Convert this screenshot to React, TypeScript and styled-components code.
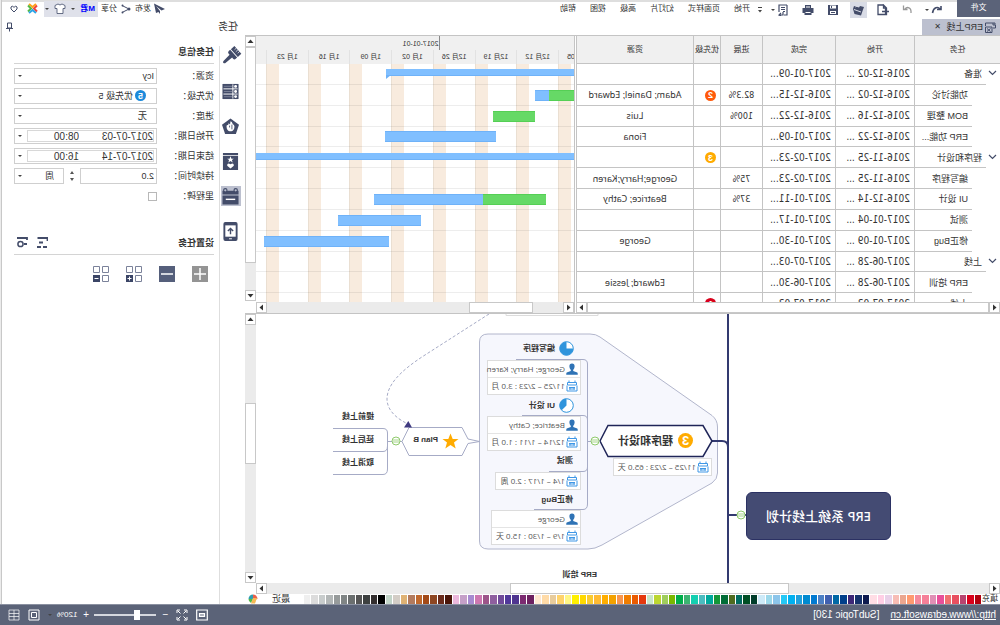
import React from "react";
import styled, { createGlobalStyle, css } from "styled-components";

const ink = "#434c69";
const line = "#c4c4c4";
const sans = `"Liberation Sans", "Noto Sans CJK SC", sans-serif`;
const humanist = `"Noto Sans", "Noto Sans CJK SC", sans-serif`;
const figures = `"DejaVu Sans Condensed", "DejaVu Sans", sans-serif`;

const Global = createGlobalStyle`
  * { box-sizing: border-box; }
  body { margin: 0; background: #ebebeb; }
  button, input, select { font: inherit; color: inherit; margin: 0; padding: 0; border: 0; background: none; border-radius: 0; }
  svg { flex: none; }
`;

/* The whole window is shown flipped left to right. */
const Window = styled.div`
  min-height: 100vh;
  display: flex;
  flex-direction: column;
  transform: scaleX(-1);
  overflow: hidden;
  background: #ebebeb;
  color: #333;
  font-family: ${sans};
  font-size: 8px;
  line-height: 12px;
`;

const Main = styled.div`
  flex: 1;
  display: flex;
  flex-direction: column;
  margin-right: 1px;
  border-right: 1px solid #c8c8c8;
  background: #fff;
`;

/* ---------- menu bar ---------- */

const MenuBar = styled.header`
  display: flex;
  align-items: center;
  height: 18px;
  border-top: 2px solid #dedede;
  padding-right: 4px;
  white-space: nowrap;
`;

const FileButton = styled.button`
  width: 43px;
  height: 18px;
  margin: -4px 11px 0 0;
  background: #5b6379;
  color: #fff;
`;

const Tools = styled.div`
  display: flex;
  align-items: center;
  gap: 8px;
`;

const ToolPair = styled.div`
  display: flex;
  align-items: center;
`;

const Tool = styled.button<{ $active?: boolean }>`
  display: flex;
  align-items: center;
  justify-content: center;
  width: 17px;
  height: 16px;
  color: ${ink};
  background: ${(p) => (p.$active ? "#d9dce6" : "transparent")};
`;

const Caret = styled.span`
  width: 0;
  height: 0;
  flex: none;
  border: 2px solid transparent;
  border-top-color: #444;
  border-bottom-width: 0;
`;

const MenuNav = styled.nav`
  display: flex;
  gap: 14px;
  margin-left: 7px;
  padding-bottom: 3px;
  flex: 1;
`;

const TextButton = styled.button`
  white-space: nowrap;
  line-height: 12px;
`;

const Account = styled.div`
  display: flex;
  align-items: center;
  gap: 3px;
  height: 16px;
  padding-bottom: 3px;
`;

const UserBox = styled.div`
  display: flex;
  align-items: center;
  gap: 5px;
  width: 54px;
  height: 16px;
  padding-left: 3px;
  background: #dfe1ea;
  color: #00f;
  font-weight: bold;
`;

const IconSlot = styled.button<{ $w: number }>`
  display: flex;
  justify-content: center;
  width: ${(p) => p.$w}px;
  color: ${ink};
`;

/* ---------- page frame ---------- */

const Body = styled.div`
  flex: 1;
  display: flex;
`;

const Left = styled.div`
  flex: 1;
  min-width: 0;
  display: flex;
  flex-direction: column;
`;

const Tabs = styled.div`
  height: 17px;
  display: flex;
  padding-top: 1px;
`;

const DocTab = styled.div`
  display: flex;
  align-items: center;
  gap: 2px;
  width: 78px;
  padding-left: 4px;
  background: #bcc0cf;
  font-size: 9px;
`;

const CloseButton = styled.button`
  margin-left: 3px;
  font-size: 8px;
  line-height: 12px;
`;

/* ---------- scroll bars ---------- */

const Bar = styled.div<{ $vertical?: boolean }>`
  display: flex;
  flex-direction: ${(p) => (p.$vertical ? "column" : "row")};
  ${(p) => (p.$vertical ? "width: 11px; min-height: 0;" : "height: 11px; min-width: 0;")}
  background: #ebebeb;
`;

const ArrowButton = styled.button`
  display: flex;
  align-items: center;
  justify-content: center;
  flex: none;
  width: 11px;
  height: 11px;
  border: 1px solid #c8c8c8;
  background: #fff;
`;

const Thumb = styled.div`
  border: 1px solid #c8c8c8;
  background: #fff;
  min-width: 0;
  min-height: 0;
`;

const Space = styled.div``;

type Dir = "up" | "down" | "left" | "right";
const arrows: Record<Dir, string> = {
  up: "M0.5 5 L3.5 1.5 L6.5 5Z",
  down: "M0.5 2 L3.5 5.5 L6.5 2Z",
  left: "M5 0.5 L1.5 3.5 L5 6.5Z",
  right: "M2 0.5 L5.5 3.5 L2 6.5Z",
};

function Arrow({ dir }: { dir: Dir }) {
  return (
    <ArrowButton type="button" aria-label={`Scroll ${dir}`}>
      <svg width="7" height="7" aria-hidden="true">
        <path d={arrows[dir]} fill="#333" />
      </svg>
    </ArrowButton>
  );
}

function ScrollBar({ vertical, parts }: { vertical?: boolean; parts: [number, number, number] }) {
  return (
    <Bar $vertical={vertical}>
      <Arrow dir={vertical ? "up" : "left"} />
      <Space style={{ flex: `${parts[0]} 0 0` }} />
      <Thumb style={{ flex: `${parts[1]} 0 0` }} />
      <Space style={{ flex: `${parts[2]} 0 0` }} />
      <Arrow dir={vertical ? "down" : "right"} />
    </Bar>
  );
}

const ChartScroll = styled.div`
  display: flex;
  flex-direction: column;
  padding-bottom: 12px;
  & > * { flex: 1; }
`;

/* ---------- task table ---------- */

const Planner = styled.section`
  display: grid;
  grid-template-columns: minmax(0, 424fr) 2px minmax(0, 318fr) 11px;
  border-top: 1px solid ${line};
  border-bottom: 1px solid ${line};
`;

const Pane = styled.div`
  display: flex;
  flex-direction: column;
  min-width: 0;
`;

const Splitter = styled.div`
  border-right: 1px solid ${line};
`;

const Table = styled.table`
  display: block;
  height: 266px;
  overflow: hidden;
`;

const TableHead = styled.thead`
  display: block;
`;

const TableBody = styled.tbody`
  display: grid;
  grid-template-rows: repeat(12, 1fr);
  height: 250px;
`;

const Row = styled.tr`
  display: grid;
  grid-template-columns: 86fr 79fr 73fr 42fr 27fr 117fr;
  min-height: 0;
`;

const HeadCell = styled.th`
  display: flex;
  align-items: center;
  justify-content: center;
  height: 28px;
  padding: 0;
  border-right: 1px solid ${line};
  border-bottom: 1px solid ${line};
  background: #f0f0f0;
  font-weight: normal;
  white-space: nowrap;
`;

const Cell = styled.td<{ $center?: boolean; $figures?: boolean }>`
  display: flex;
  align-items: center;
  justify-content: ${(p) => (p.$center ? "center" : "flex-start")};
  padding: 1px 0 0 ${(p) => (p.$center ? 0 : 4)}px;
  border-right: 1px solid ${line};
  border-bottom: 1px solid ${line};
  font-family: ${(p) => (p.$figures ? figures : humanist)};
  font-size: ${(p) => (p.$figures && !p.$center ? 10 : 9)}px;
  white-space: nowrap;
  overflow: hidden;
`;

const TaskCell = styled.td`
  display: flex;
  padding: 0;
  border-right: 1px solid ${line};
`;

const Toggle = styled.button<{ $open: boolean }>`
  width: 14px;
  visibility: ${(p) => (p.$open ? "visible" : "hidden")};
`;

const TaskName = styled.span<{ $child: boolean }>`
  flex: 1;
  display: flex;
  align-items: center;
  margin-left: ${(p) => (p.$child ? 14 : 0)}px;
  padding: 1px 0 0 4px;
  border-bottom: 1px solid ${line};
  font-size: 9px;
  white-space: nowrap;
`;

const Badge = styled.span<{ $color: string; $size: number }>`
  display: flex;
  align-items: center;
  justify-content: center;
  flex: none;
  width: ${(p) => p.$size}px;
  height: ${(p) => p.$size}px;
  border-radius: 50%;
  background: ${(p) => p.$color};
  color: #fff;
  font-family: ${sans};
  font-size: ${(p) => p.$size - 2}px;
  font-weight: bold;
`;

type Task = {
  name: string;
  child?: boolean;
  start: string;
  end: string;
  progress?: string;
  priority?: [string, string];
  who?: string;
  bar?: { from: number; done: number; todo: number; summary?: boolean; open?: boolean };
};

/* Bar positions are in units of the 318-unit wide time axis. */
const tasks: Task[] = [
  { name: "准备", start: "2016-12-02 ...", end: "2017-01-09...", bar: { from: 0, done: 0, todo: 188, summary: true } },
  { name: "功能讨论", child: true, start: "2016-12-02 ...", end: "2016-12-15...", progress: "82.3%", priority: ["2", "#ff5a0a"], who: "Adam; Daniel; Edward", bar: { from: 0, done: 25, todo: 14 } },
  { name: "BOM 整理", child: true, start: "2016-12-16 ...", end: "2016-12-22...", progress: "100%", who: "Luis", bar: { from: 39, done: 42, todo: 0 } },
  { name: "ERP 功能...", child: true, start: "2016-12-22 ...", end: "2017-01-09...", who: "Fiona", bar: { from: 78, done: 0, todo: 111 } },
  { name: "程序和设计", start: "2016-11-25 ...", end: "2017-02-23...", priority: ["3", "#ffab00"], bar: { from: 0, done: 0, todo: 318, summary: true, open: true } },
  { name: "编写程序", child: true, start: "2016-11-25 ...", end: "2017-02-23...", progress: "75%", who: "George;Harry;Karen" },
  { name: "UI 设计", child: true, start: "2016-12-14 ...", end: "2017-01-11...", progress: "37%", who: "Beatrice; Cathy", bar: { from: 28, done: 63, todo: 109 } },
  { name: "测试", child: true, start: "2017-01-04 ...", end: "2017-01-17...", bar: { from: 153, done: 0, todo: 83 } },
  { name: "修正Bug", child: true, start: "2017-01-09 ...", end: "2017-01-30...", who: "George", bar: { from: 185, done: 0, todo: 125 } },
  { name: "上线", start: "2017-06-28 ...", end: "2017-07-03..." },
  { name: "ERP 培训", child: true, start: "2017-06-28 ...", end: "2017-06-30...", who: "Edward; Jessie" },
  { name: "上线", child: true, start: "2017-07-03 ...", end: "2017-07-03...", priority: ["1", "#d9001b"] },
];

function TaskTable() {
  return (
    <Table>
      <TableHead>
        <Row>
          {["任务", "开始", "完成", "进展", "优先级", "资源"].map((h) => (
            <HeadCell key={h} scope="col">{h}</HeadCell>
          ))}
        </Row>
      </TableHead>
      <TableBody>
        {tasks.map((t, i) => (
          <Row key={i}>
            <TaskCell>
              <Toggle type="button" $open={!t.child} aria-label="Collapse">
                <svg width="9" height="6" aria-hidden="true">
                  <path d="M1 1 L4.500 4.500 L8 1" fill="none" stroke={ink} strokeWidth="1.200" />
                </svg>
              </Toggle>
              <TaskName $child={!!t.child}>{t.name}</TaskName>
            </TaskCell>
            <Cell $figures>{t.start}</Cell>
            <Cell $figures>{t.end}</Cell>
            <Cell $center $figures>{t.progress}</Cell>
            <Cell>{t.priority && <Badge $color={t.priority[1]} $size={11}>{t.priority[0]}</Badge>}</Cell>
            <Cell $center>{t.who}</Cell>
          </Row>
        ))}
      </TableBody>
    </Table>
  );
}

/* ---------- gantt chart ---------- */

const weekGrid = css`
  display: grid;
  grid-template-columns: 16fr repeat(7, 41.700fr) 10fr;
`;

const MonthRow = styled.div`
  display: flex;
  height: 14px;
  background: #f0f0f0;
  font-size: 7px;
`;

const MonthLabel = styled.div`
  margin-left: 42%;
  padding: 2px 0 0 1px;
  border-left: 1px solid #888;
`;

const WeekRow = styled.div`
  ${weekGrid}
  height: 14px;
  background: #f0f0f0;
  font-size: 7px;
`;

const WeekCell = styled.div`
  display: flex;
  align-items: center;
  justify-content: center;
  min-width: 0;
  overflow: hidden;
  white-space: nowrap;
  border-right: 1px solid #e2e2e2;
  &:first-child { justify-content: flex-end; padding-right: 8px; }
  &:last-child { border-right: 0; }
`;

const Chart = styled.div`
  display: grid;
  height: 238px;
  overflow: hidden;
`;

const Weekends = styled.div`
  ${weekGrid}
  grid-area: 1 / 1;
`;

const Weekend = styled.div`
  display: flex;
  justify-content: flex-end;
  min-width: 0;
  &::after { content: ""; width: 12px; background: #f8ebde; border-right: 1px solid #eadfd2; }
  &:last-child::after { display: none; }
`;

const Lanes = styled.div`
  grid-area: 1 / 1;
  display: grid;
  grid-template-rows: repeat(12, 1fr);
  height: 250px;
`;

const Lane = styled.div`
  display: flex;
  align-items: center;
  padding-top: 1px;
  border-bottom: 1px solid rgba(0, 0, 0, 0.07);
`;

const Piece = styled.div<{ $done?: boolean }>`
  height: 11px;
  background: ${(p) => (p.$done ? "#66d966" : "#80bfff")};
  border: solid ${(p) => (p.$done ? "#55cf55" : "#6fb2f8")};
  border-width: 1px 0;
`;

const Summary = styled.div<{ $open?: boolean }>`
  position: relative;
  height: 7px;
  margin-bottom: 3px;
  background: #80bfff;
  border-bottom: 1px solid #6fb2f8;
  &::after {
    content: "";
    display: ${(p) => (p.$open ? "none" : "block")};
    position: absolute;
    right: 0;
    top: 6px;
    border-top: 4px solid #6fb2f8;
    border-left: 5px solid transparent;
  }
`;

const pct = (n: number) => `${(n / 318) * 100}%`;

function Gantt() {
  const weeks = ["05", "12月 12", "12月 19", "12月 26", "1月 02", "1月 09", "1月 16", "1月 23", ""];
  return (
    <>
      <MonthRow><MonthLabel>2017-01-01</MonthLabel></MonthRow>
      <WeekRow>{weeks.map((w, i) => <WeekCell key={i}>{w}</WeekCell>)}</WeekRow>
      <Chart>
        <Weekends>{weeks.map((_, i) => <Weekend key={i} />)}</Weekends>
        <Lanes>
          {tasks.map((t, i) => (
            <Lane key={i}>
              {t.bar && t.bar.summary && <Summary $open={t.bar.open} style={{ width: pct(t.bar.todo) }} />}
              {t.bar && !t.bar.summary && (
                <>
                  <Piece $done style={{ marginLeft: pct(t.bar.from), width: pct(t.bar.done) }} />
                  <Piece style={{ width: pct(t.bar.todo) }} />
                </>
              )}
            </Lane>
          ))}
        </Lanes>
      </Chart>
    </>
  );
}

/* ---------- mind map ---------- */

const MapRow = styled.section`
  flex: 1;
  display: grid;
  grid-template: minmax(269px, 1fr) 11px / minmax(0, 1fr) 11px;
`;

const Canvas = styled.div`
  position: relative;
  overflow: hidden;
  background: #fff;
`;

const Lines = styled.svg`
  display: block;
  position: absolute;
  left: 0;
  top: 0;
`;

const Node = styled.div<{ $x: number; $y: number }>`
  position: absolute;
  left: ${(p) => p.$x}px;
  top: ${(p) => p.$y}px;
  display: flex;
  align-items: center;
  gap: 4px;
  font-weight: bold;
  white-space: nowrap;
`;

const RootNode = styled(Node)`
  justify-content: center;
  width: 145px;
  height: 48px;
  border: 1px solid #2b3163;
  border-radius: 6px;
  background: #444b73;
  color: #fff;
  font-family: ${humanist};
  font-size: 13px;
  font-weight: 500;
`;

const TopicNode = styled(Node)`
  gap: 5px;
  font-size: 11px;
`;

const Info = styled.div<{ $x: number; $y: number; $w: number }>`
  position: absolute;
  left: ${(p) => p.$x}px;
  top: ${(p) => p.$y}px;
  width: ${(p) => p.$w}px;
  border: 1px solid #dcdcdc;
  background: #fff;
  font-family: "Open Sans", "Noto Sans CJK SC", sans-serif;
  color: #555;
`;

const InfoRow = styled.div`
  display: flex;
  align-items: center;
  gap: 1px;
  height: 16px;
  padding-left: 2px;
  white-space: nowrap;
  & + & { border-top: 1px solid #e4e4e4; height: 17px; }
`;

const PersonIcon = () => (
  <svg width="12" height="12" viewBox="0 0 12 12" aria-hidden="true">
    <path d="M6 0.500C7.800 0.500 8.700 1.700 8.600 3.400C8.500 4.900 7.900 6.200 7.200 6.800V7.900L11.300 9.500Q11.800 10 11.800 11.700H0.200Q0.200 10 0.700 9.500L4.800 7.900V6.800C4.100 6.200 3.500 4.900 3.400 3.400C3.300 1.700 4.200 0.500 6 0.500Z" fill="#2f73b5" />
  </svg>
);

const CalendarIcon = () => (
  <svg width="12" height="12" viewBox="0 0 12 12" aria-hidden="true">
    <path d="M3 0.500V3M9 0.500V3M1.500 2.500H10.500V5H1.500ZM1 5.500V11H11V5.500M3 7.500H9M3 9H9M4 7V9.500M8 7V9.500" fill="none" stroke="#3e97e6" />
  </svg>
);

const Pie = ({ d }: { d: string }) => (
  <svg width="15" height="15" viewBox="0 0 15 15" aria-hidden="true">
    <circle cx="7.500" cy="7.500" r="6.800" fill="#fff" stroke="#2f94dc" />
    <path d={d} fill="#2f94dc" />
  </svg>
);

const Fold = ({ x, y }: { x: number; y: number }) => (
  <g stroke="#8fca6c" fill="#fff">
    <circle cx={x} cy={y} r="4" />
    <path d={`M${x - 3} ${y - 1}h6M${x - 3} ${y + 1}h6`} strokeWidth="0.800" />
  </g>
);

function MindMap() {
  return (
    <Canvas>
      <Lines width="744" height="269" aria-hidden="true">
        <path d="M410 20H512Q520.500 20 520.500 28V227Q520.500 235 512 235H412Q405 235 398 231L288 169Q282.500 165 282.500 159V113Q282.500 106 288 101.500L400 23Q404 20 410 20Z" fill="#f6f7fd" stroke="#b2b6cc" />
        <path d="M402 0V1.500H494V0" fill="none" stroke="#dcdcdc" />
        <path d="M272 0V269M272 201H254M272 133Q272 127 278 127H288" fill="none" stroke="#333a70" strokeWidth="2" />
        <path d="M400 127L392 111.500H297L288 127L297 142.500H392Z" fill="#fff" stroke="#1f2558" strokeWidth="1.500" />
        <g fill="none" stroke="#a6abc6">
          <path d="M400 127.500H412" />
          <path d="M484 45.500H417Q412.500 45.500 412.500 50V190Q412.500 195.500 417 195.500H466" />
          <path d="M478 101.500H417Q412.500 101.500 412.500 106" />
          <path d="M451 157.500H417Q412.500 157.500 412.500 153" />
          <path d="M598 127.500H612" />
          <path d="M667 114.500H617Q612.500 114.500 612.500 119V155Q612.500 160.500 617 160.500H667" />
          <path d="M612.500 132Q612.500 137.500 617 137.500H667" />
          <path d="M520.500 127.500L532 125L538 113.500H591L598 127.500L591 141.500H538L532 129.500Z" fill="#fff" />
          <path d="M511 0L575 41C600 57 613 71 613 85C613 97 602 105 594 109" strokeDasharray="3 2" />
        </g>
        <path d="M591.700 107L596 113.500H588Z" fill="#3f3a80" />
        <path d="M549.500 119.500L551.700 125H557.500L553 128.500L554.700 134.500L549.500 131L544.300 134.500L546 128.500L541.500 125H547.300Z" fill="#ffab00" />
        <Fold x={259} y={201} />
        <Fold x={405} y={127} />
        <Fold x={604} y={127} />
      </Lines>
      <RootNode $x={109} $y={178}>ERP 系统上线计划</RootNode>
      <TopicNode $x={307} $y={119}>
        <Badge $color="#ffab00" $size={15}>3</Badge>程序和设计
      </TopicNode>
      <Info $x={288} $y={144} $w={99}>
        <InfoRow><CalendarIcon />11/25 – 2/23 : 65.0 天</InfoRow>
      </Info>

      <Node $x={426} $y={27}><Pie d="M7.500 0.700A6.800 6.800 0 1 1 0.700 7.500H7.500Z" />编写程序</Node>
      <Info $x={419} $y={46} $w={94}>
        <InfoRow><PersonIcon />George; Harry; Karen</InfoRow>
        <InfoRow><CalendarIcon />11/25 – 2/23 : 3.0 月</InfoRow>
      </Info>
      <Node $x={426} $y={84}><Pie d="M7.500 0.700A6.800 6.800 0 0 1 12.300 12.300L7.500 7.500Z" />UI 设计</Node>
      <Info $x={419} $y={102} $w={94}>
        <InfoRow><PersonIcon />Beatrice; Cathy</InfoRow>
        <InfoRow><CalendarIcon />12/14 – 1/11 : 1.0 月</InfoRow>
      </Info>
      <Node $x={427} $y={141}>测试</Node>
      <Info $x={419} $y={158} $w={86}>
        <InfoRow><CalendarIcon />1/4 – 1/17 : 2.0 周</InfoRow>
      </Info>
      <Node $x={427} $y={180}>修正Bug</Node>
      <Info $x={419} $y={196} $w={90}>
        <InfoRow><PersonIcon />George</InfoRow>
        <InfoRow><CalendarIcon />1/9 – 1/30 : 15.0 天</InfoRow>
      </Info>
      <Node $x={403} $y={255}>ERP 培训</Node>
      <Node $x={562} $y={120}>Plan B</Node>
      <Node $x={626} $y={97}>提前上线</Node>
      <Node $x={626} $y={120}>延后上线</Node>
      <Node $x={626} $y={143}>取消上线</Node>
    </Canvas>
  );
}

/* ---------- colour strip ---------- */

const ColorStrip = styled.div`
  display: flex;
  align-items: center;
  height: 10px;
  padding: 0 3px 0 2px;
  white-space: nowrap;
`;

const FillLabel = styled.span`
  width: 17px;
  flex: none;
`;

const RecentLabel = styled.span`
  width: 46px;
  flex: none;
  padding-left: 14px;
  font-size: 9px;
`;

const Swatches = styled.div`
  flex: 1;
  display: flex;
  gap: 1px;
`;

const Swatch = styled.button<{ $c: string }>`
  flex: 1;
  height: 9px;
  background: #${(p) => p.$c};
`;

const palette =
  "b0000f d9001b b8446f e85060 f07070 e8509a e08fb5 f58098 f58a9c ff9a70 eba68f f7bdb5 e8d0e8 ffcfe5 ffdde5 0d1a4f 15316b 3d2777 003f8a 0068a5 3f60b0 4c80c5 0079d0 008ad0 20a0dc 00b0f0 25c8f5 8cc5ea 9cd8ea cdeaf8 003d2a 004f25 006b60 4f6b1f 006d37 149638 00a99d 4bbcc0 14cfb0 3cb371 00ad4a 7ab800 9fcd5c bcd631 c9e6c9 e5390e ea5b00 f07d00 f7964f f3a200 ffae00 ffbb33 f9cb32 ffd900 fff000 fff685 ffd36b e8cc9c ffdba8 ffe8d0 6d2160 7c2a70 4f3590 50389a 704a9a 8f5f9f 9c5589 cc78b0 a78bd0 c5a0c8 ebb8dc 4a1509 6b2b1c 8e4622 a34a18 c0692e b37b5e dfb274 d3cdc6 c3d5c9 000000 332e2e 3d4040 555555 6b6f6f 808585 979b9b b3b7b7 c8cccc dcdcdc efefef".split(" ");

/* ---------- side panel ---------- */

const Panel = styled.aside`
  width: 243px;
  flex: none;
  display: flex;
  flex-direction: column;
`;

const PanelTitle = styled.div`
  display: flex;
  align-items: center;
  justify-content: space-between;
  height: 18px;
  padding: 0 3px 0 7px;
  font-size: 10px;
`;

const PanelBody = styled.div`
  flex: 1;
  display: flex;
  margin-top: 10px;
`;

const Rail = styled.div`
  display: flex;
  flex-direction: column;
  gap: 15px;
  width: 26px;
  padding-left: 4px;
  border-right: 1px solid #dedede;
`;

const RailButton = styled.button<{ $active?: boolean }>`
  display: flex;
  align-items: center;
  justify-content: center;
  width: 20px;
  height: 20px;
  color: ${ink};
  background: ${(p) => (p.$active ? "#bcc0cf" : "transparent")};
`;

const Form = styled.form`
  flex: 1;
  display: flex;
  flex-direction: column;
  gap: 4px;
  padding: 0 12px 0 5px;
  font-size: 9px;
`;

const Heading = styled.div`
  display: flex;
  justify-content: space-between;
  height: 18px;
  border-bottom: 1px solid #d4d4d4;
  font-weight: bold;
`;

const HeadingTools = styled.div`
  display: flex;
  gap: 8px;
  padding-right: 2px;
  color: ${ink};
`;

const Field = styled.div`
  display: flex;
  align-items: center;
  height: 16px;
`;

const Label = styled.label`
  width: 57px;
  flex: none;
`;

const Box = styled.div<{ $w?: number }>`
  position: relative;
  display: flex;
  align-items: center;
  ${(p) => (p.$w ? `width: ${p.$w}px;` : "flex: 1;")}
  min-width: 0;
  height: 16px;
  padding: 1px 3px 1px 2px;
  border: 1px solid #cfcfcf;
  background: #fff;
`;

const Select = styled.select<{ $pad: number }>`
  flex: 1;
  min-width: 0;
  appearance: none;
  padding-left: ${(p) => p.$pad}px;
  line-height: 12px;
  outline: none;
`;

const FieldBadge = styled(Badge)`
  position: absolute;
  left: 10px;
  top: 1px;
`;

const DateInner = styled.div`
  flex: 1;
  display: flex;
  justify-content: space-between;
  height: 12px;
  margin-right: 5px;
  padding: 0 23px 0 0;
  border: 1px solid #d8d8d8;
  font-size: 10px;
`;

const TextInput = styled.input<{ $w: number }>`
  width: ${(p) => p.$w}px;
  height: 10px;
  line-height: 10px;
  outline: none;
`;

const Spinner = styled.div`
  display: flex;
  flex-direction: column;
  align-items: center;
  gap: 4px;
  width: 16px;
`;

const SpinButton = styled.button<{ $up?: boolean }>`
  width: 4px;
  height: 3px;
  background: #555;
  clip-path: ${(p) => (p.$up ? "polygon(50% 0, 100% 100%, 0 100%)" : "polygon(0 0, 100% 0, 50% 100%)")};
`;

const Check = styled.input`
  appearance: none;
  width: 9px;
  height: 9px;
  border: 1px solid #b8b8b8;
  background: #fff;
`;

const Gap = styled.div`
  height: 25px;
`;

const Actions = styled.div`
  display: flex;
  gap: 17px;
  padding: 7px 0 0 6px;
`;

const Action = styled.button`
  width: 16px;
  height: 16px;
  display: flex;
`;

const Sq = ({ sign }: { sign: "+" | "-" }) => (
  <svg width="16" height="16" aria-hidden="true">
    <path d="M0.500 0.500H6.500V6.500H0.500ZM9.500 0.500H15.500V6.500H9.500ZM0.500 9.500H6.500V15.500H0.500Z" fill="#fff" stroke="#7b829a" />
    <path d="M9 9H16V16H9Z" fill="#3b4566" />
    <path d={sign === "+" ? "M10.500 12.500H14.500M12.500 10.500V14.500" : "M10.500 12.500H14.500"} stroke="#fff" />
  </svg>
);

function DateField({ label, id, date, time }: { label: string; id: string; date: string; time: string }) {
  return (
    <Field>
      <Label htmlFor={id}>{label}</Label>
      <Box>
        <DateInner>
          <TextInput id={id} $w={56} defaultValue={date} />
          <TextInput $w={28} defaultValue={time} aria-label={`${label} time`} />
        </DateInner>
        <Caret />
      </Box>
    </Field>
  );
}

const railIcons: [string, React.ReactNode][] = [
  ["Format", <g key="a" fill="currentColor" transform="rotate(-48 9 9)"><path d="M3.500 -1.500H14.500V3.500H3.500ZM3.500 4.500H14.500V6.500Q14.500 8.500 12.500 8.500H11L10.500 18Q9 20.500 7.500 18L7 8.500H5.500Q3.500 8.500 3.500 6.500Z" /><path d="M6.500 -2V1M9 -2V1.500M11.500 -2V1" stroke="#fff" strokeWidth="0.700" /></g>],
  ["Outline", <g key="b"><path fill="currentColor" d="M0.500 1H17.500V17H0.500Z" /><path stroke="#fff" fill="none" d="M6.500 1.500V16.500M1.500 6.200H16.500M1.500 11.700H16.500" /><path stroke="#8b91a5" fill="none" strokeWidth="0.800" d="M7 3.500H16M7 9H16M7 14.500H16" /><g fill="#fff"><circle cx="3.600" cy="3.600" r="1.500" /><circle cx="3.600" cy="9" r="1.500" /><circle cx="3.600" cy="14.400" r="1.500" /></g></g>],
  ["Clipart", <g key="c"><path fill="currentColor" d="M9 0.500L18 7.200L14.700 17H3.300L0 7.200Z" /><path d="M6.500 6.500Q7.500 3.500 9 3.500L9.500 7L11 5.500L11.500 7.500Q13.500 7 13.200 9Q13 13.500 10 14H8Q5 13.500 4.800 9Q5 7 6.500 6.500Z" fill="#fff" /><path d="M7.500 7V12M10 8V10" stroke="currentColor" strokeWidth="0.900" /></g>],
  ["Marks", <g key="d"><path fill="currentColor" d="M1 0H17V2H1ZM1 3H17V18H1Z" /><path fill="#fff" d="M9 3.500L10 6H12.500L10.500 7.500L11.300 10L9 8.600L6.700 10L7.500 7.500L5.500 6H8ZM9 16.500L5.500 13.500Q5.200 11 7.200 11L9 12L10.800 11Q12.800 11 12.500 13.500Z" /></g>],
  ["Task", <g key="e"><path fill="currentColor" d="M0.500 3H17.500V7H0.500ZM0.500 8H17.500V17.500H0.500Z" /><circle cx="3.500" cy="2.500" r="1.800" fill="#bcc0cf" stroke="currentColor" strokeWidth="1.200" /><circle cx="14.500" cy="2.500" r="1.800" fill="#bcc0cf" stroke="currentColor" strokeWidth="1.200" /><path stroke="#fff" strokeWidth="1.500" d="M4 12H14" /></g>],
  ["Slides", <g key="f"><rect x="1.500" y="-1" width="15" height="20" rx="2" fill="currentColor" /><path fill="#fff" d="M3.500 2.500H14.500V14.500H3.500Z" /><path stroke="currentColor" strokeWidth="1.500" fill="none" d="M9 12V6M6.200 8.500L9 5.700L11.800 8.500" /><path d="M7.500 16.700H10.500" stroke="#fff" /></g>],
];

function TaskPanel() {
  return (
    <Panel>
      <PanelTitle>
        任务
        <svg width="9" height="10" viewBox="0 0 9 10" aria-hidden="true">
          <path d="M2.500 1V6H6.500V1ZM1 6.500H8M4.500 6V9.500" fill="none" stroke={ink} />
        </svg>
      </PanelTitle>
      <PanelBody>
        <Rail>
          {railIcons.map(([name, icon], i) => (
            <RailButton key={name} type="button" aria-label={name} $active={i === 4}>
              <svg width="17" height="17" viewBox="0 0 18 18" overflow="visible" aria-hidden="true">
                {icon}
              </svg>
            </RailButton>
          ))}
        </Rail>
        <Form>
          <Heading>任务信息</Heading>
          <Field>
            <Label htmlFor="res">资源：</Label>
            <Box><Select id="res" $pad={0}><option>Icy</option></Select><Caret /></Box>
          </Field>
          <Field>
            <Label htmlFor="pri">优先级：</Label>
            <Box>
              <FieldBadge $color="#1c8adb" $size={11}>5</FieldBadge>
              <Select id="pri" $pad={21}><option>优先级 5</option></Select>
              <Caret />
            </Box>
          </Field>
          <Field>
            <Label htmlFor="prog">进度：</Label>
            <Box><Select id="prog" $pad={7}><option>无</option></Select><Caret /></Box>
          </Field>
          <DateField label="开始日期：" id="from" date="2017-07-03" time="08:00" />
          <DateField label="结束日期：" id="to" date="2017-07-14" time="16:00" />
          <Field>
            <Label htmlFor="dur">持续时间：</Label>
            <Box $w={77}><TextInput id="dur" $w={60} defaultValue="2.0" /></Box>
            <Spinner>
              <SpinButton type="button" $up aria-label="Increase" />
              <SpinButton type="button" aria-label="Decrease" />
            </Spinner>
            <Box $w={50}><Select $pad={7} aria-label="Unit"><option>周</option></Select><Caret /></Box>
          </Field>
          <Field>
            <Label htmlFor="mile">里程碑：</Label>
            <Check id="mile" type="checkbox" />
          </Field>
          <Gap />
          <Heading>
            设置任务
            <HeadingTools>
              <svg width="12" height="11" aria-hidden="true">
                <path d="M0.500 4V1H10.500M5 5.500H9M1 10H5M7 10H11" fill="none" stroke="currentColor" strokeWidth="1.800" />
              </svg>
              <svg width="12" height="11" aria-hidden="true">
                <path d="M1 3V1H11M1 7H4" fill="none" stroke="currentColor" strokeWidth="1.800" />
                <circle cx="7.500" cy="7" r="2.600" fill="none" stroke="currentColor" strokeWidth="1.500" />
              </svg>
            </HeadingTools>
          </Heading>
          <Actions>
            <Action type="button" aria-label="Add">
              <svg width="16" height="16" aria-hidden="true"><path d="M0 0H16V16H0Z" fill="#949494" /><path d="M2 8H14M8 2V14" stroke="#fff" strokeWidth="1.500" /></svg>
            </Action>
            <Action type="button" aria-label="Remove">
              <svg width="16" height="16" aria-hidden="true"><path d="M0 0H16V16H0Z" fill="#555f7b" /><path d="M2 8H14" stroke="#fff" strokeWidth="1.500" /></svg>
            </Action>
            <Action type="button" aria-label="Add column"><Sq sign="+" /></Action>
            <Action type="button" aria-label="Remove column"><Sq sign="-" /></Action>
          </Actions>
        </Form>
      </PanelBody>
    </Panel>
  );
}

/* ---------- status bar ---------- */

const Status = styled.footer`
  display: flex;
  align-items: center;
  height: 21px;
  padding: 0 8px 0 4px;
  border-top: 1px solid #8b91a1;
  background: #5b6378;
  color: #fff;
  font-size: 10px;
  white-space: nowrap;
`;

const SiteLink = styled.a`
  color: inherit;
`;

const Selected = styled.span`
  flex: 1;
  margin-left: 11px;
`;

const StatusTools = styled.div`
  display: flex;
  align-items: center;
  gap: 8px;
`;

const Zoom = styled.div`
  display: flex;
  align-items: center;
  gap: 5px;
`;

const StatusButton = styled.button`
  display: flex;
  align-items: center;
  justify-content: center;
  min-width: 7px;
  height: 12px;
`;

const Range = styled.input`
  appearance: none;
  width: 62px;
  height: 12px;
  &::-webkit-slider-runnable-track { height: 2px; background: #d4d7de; }
  &::-webkit-slider-thumb { appearance: none; width: 6px; height: 10px; margin-top: -4px; background: #fff; }
`;

const ZoomValue = styled.span`
  font-size: 8px;
`;

const Stroke = ({ d, sw = 1.2 }: { d: string; sw?: number }) => (
  <svg width="12" height="12" viewBox="0 0 12 12" aria-hidden="true">
    <path d={d} fill="none" stroke="currentColor" strokeWidth={sw} />
  </svg>
);

export default function App() {
  return (
    <Window>
      <Global />
      <Main>
        <MenuBar>
          <FileButton type="button">文件</FileButton>
          <Tools>
            <ToolPair>
              <Tool type="button" aria-label="Undo"><Stroke d="M3 5C5 2.500 9.500 3 10.500 9M2 2V5.500H6" sw={1.6} /></Tool>
              <Caret />
            </ToolPair>
            <Tool type="button" aria-label="Redo"><svg width="12" height="12" aria-hidden="true"><path d="M9 5C7 2.500 2.500 3 3 9M10.500 1.500V5.500H6.500" fill="none" stroke="#999" strokeWidth="1.300" /></svg></Tool>
            <Tool type="button" aria-label="New page"><Stroke d="M5.500 1H11V10.500H2.500V4L5.500 1V4H2.500M0 7.500H7M3.500 4.500V11" sw={1.3} /></Tool>
            <Tool type="button" aria-label="Open" $active>
              <svg width="13" height="12" viewBox="0 0 13 12" aria-hidden="true"><path fill="currentColor" d="M1 3L5 2L6 3.500L11 2L12 5L10.500 10L4 11.500L2.500 7Z" /><path d="M4 8L11 5.500M7 1L9.500 3" stroke="#d9dce6" /></svg>
            </Tool>
            <Tool type="button" aria-label="Save">
              <svg width="12" height="12" aria-hidden="true"><path fill="currentColor" d="M1 1H11V11H1Z" /><path fill="#fff" d="M3 1.500H9V4.500H3ZM3 7H9V10H3Z" /><path d="M4 8.500H8M7.500 2V4" stroke="currentColor" /></svg>
            </Tool>
            <Tool type="button" aria-label="Print">
              <svg width="12" height="12" aria-hidden="true"><path fill="currentColor" d="M3 1H9V4H11.500V9H9.500V11H2.500V9H0.500V4H3Z" /><path d="M3.500 8.500H8.500M4 3H8" stroke="#fff" /></svg>
            </Tool>
            <ToolPair>
              <Tool type="button" aria-label="Export"><Stroke d="M2 1H10V8M2 1V11H5M4 3.500H8M4 5.500H8M4 7.500H6M6 8V11H10M8 9L10 11L8 12" /></Tool>
              <Caret />
            </ToolPair>
            <svg width="6" height="8" aria-hidden="true"><path d="M1 1.500H5" stroke="#444" /><path d="M1 4H5L3 6.500Z" fill="#444" /></svg>
          </Tools>
          <MenuNav>
            {["开始", "页面样式", "幻灯片", "高级", "视图", "帮助"].map((m) => (
              <TextButton key={m} type="button">{m}</TextButton>
            ))}
          </MenuNav>
          <Account>
            <IconSlot $w={12} type="button" aria-label="Send">
              <svg width="11" height="11" aria-hidden="true"><path fill="currentColor" d="M11 0.500L0 6L3.500 7.500L9 3L5 8V11L6.500 9L9 10Z" /></svg>
            </IconSlot>
            <TextButton type="button">发布</TextButton>
            <IconSlot $w={12} type="button" aria-label="Share nodes">
              <svg width="10" height="10" aria-hidden="true"><path d="M9 1.500L2 5L9 8.500" fill="none" stroke="currentColor" /><circle cx="2" cy="5" r="1.500" fill="currentColor" /><circle cx="8.500" cy="1.500" r="1" fill="currentColor" /><circle cx="8.500" cy="8.500" r="1" fill="currentColor" /></svg>
            </IconSlot>
            <TextButton type="button">分享</TextButton>
            <UserBox>
              M君<Caret />
              <svg width="12" height="11" viewBox="0 0 12 11" aria-hidden="true"><path d="M4 1L1 2.500V5.500H3V10.500H9V5.500H11V2.500L8 1Q6 3 4 1Z" fill="#fff" stroke={ink} strokeWidth="0.800" /></svg>
              <Caret />
            </UserBox>
            <IconSlot $w={16} type="button" aria-label="Products">
              <svg width="11" height="11" viewBox="0 0 11 11" aria-hidden="true" fill="none" strokeWidth="2">
                <path d="M2 1L5.500 4L9 1" stroke="#ffa31a" /><path d="M1 2.500L4 5.500L1 8.500" stroke="#f0483e" /><path d="M10 2.500L7 5.500L10 8.500" stroke="#53b947" /><path d="M2 10L5.500 7L9 10" stroke="#2da5e8" />
              </svg>
            </IconSlot>
            <IconSlot $w={16} type="button" aria-label="Favourite">
              <svg width="8" height="8" aria-hidden="true"><path d="M4 7L1 4V2L2.500 1L4 2.500L5.500 1L7 2V4Z" fill="none" stroke={ink} /></svg>
            </IconSlot>
          </Account>
        </MenuBar>
        <Body>
          <Left>
            <Tabs>
              <DocTab>
                <svg width="11" height="11" aria-hidden="true"><path d="M3 1H10.500V4M0.500 3V6H3M1 1H3V3H1ZM4 5H10.500V10.500H4ZM5.500 6.500L9 9.500M9 6.500L5.500 9.500" fill="none" stroke={ink} /></svg>
                ERP上线
                <CloseButton type="button" aria-label="Close">✕</CloseButton>
              </DocTab>
            </Tabs>
            <Planner>
              <Pane>
                <TaskTable />
                <ScrollBar parts={[0, 1, 0]} />
              </Pane>
              <Splitter />
              <Pane>
                <Gantt />
                <ScrollBar parts={[30, 62, 203]} />
              </Pane>
              <ChartScroll>
                <ScrollBar vertical parts={[0, 215, 27]} />
              </ChartScroll>
            </Planner>
            <MapRow>
              <MindMap />
              <ScrollBar vertical parts={[79, 59, 109]} />
              <ScrollBar parts={[201, 277, 244]} />
            </MapRow>
            <ColorStrip>
              <FillLabel>填充</FillLabel>
              <Swatches>
                {palette.map((c, i) => <Swatch key={i} type="button" $c={c} aria-label={`Fill #${c}`} />)}
              </Swatches>
              <RecentLabel>最近</RecentLabel>
              <svg width="10" height="10" viewBox="0 0 10 10" aria-hidden="true"><path d="M5 0.500A4.500 4.500 0 0 1 9.500 5L5 5Z" fill="#2f9fb0" /><path d="M5 0.500A4.500 4.500 0 0 0 0.500 5L5 6Z" fill="#e8604c" /><path d="M9.500 5A4.500 4.500 0 0 1 7 9L5 5Z" fill="#53b947" /><path d="M1 4L5 4L7 9.500H3Z" fill="#f7b955" /></svg>
            </ColorStrip>
          </Left>
          <TaskPanel />
        </Body>
      </Main>
      <Status>
        <SiteLink href="http://www.edrawsoft.cn">http://www.edrawsoft.cn</SiteLink>
        <Selected>[SubTopic 130]</Selected>
        <StatusTools>
          <StatusButton type="button" aria-label="Fit page"><Stroke d="M0.700 1H11.300V11H0.700ZM3.500 4.500H8.500V7.500H3.500ZM3.500 6H8.500" /></StatusButton>
          <StatusButton type="button" aria-label="Full screen"><Stroke d="M1 4V1H4M8 1H11V4M11 8V11H8M4 11H1V8M2 2L4.500 4.500M10 2L7.500 4.500M10 10L7.500 7.500M2 10L4.500 7.500" sw={1} /></StatusButton>
          <Zoom>
            <StatusButton type="button" aria-label="Zoom out">−</StatusButton>
            <Range type="range" min={0} max={100} defaultValue={30} aria-label="Zoom" />
            <StatusButton type="button" aria-label="Zoom in">+</StatusButton>
            <ZoomValue>120%</ZoomValue>
            <Caret />
          </Zoom>
          <StatusButton type="button" aria-label="Fit width"><Stroke d="M1 1H11V11H1ZM3.500 3.500H8.500V8.500H3.500Z" sw={1} /></StatusButton>
          <StatusButton type="button" aria-label="Grid"><Stroke d="M1 1H11V11H1ZM1 4.500H11M1 7.500H11M6 1V11" sw={0.7} /></StatusButton>
        </StatusTools>
      </Status>
    </Window>
  );
}
